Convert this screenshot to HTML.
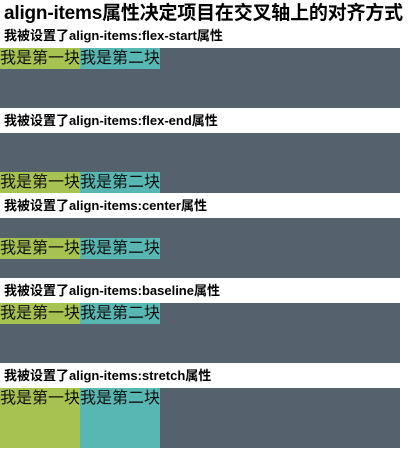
<!DOCTYPE html>
<html><head><meta charset="utf-8"><style>
body{margin:0;width:413px;height:449px;background:#fff;position:relative;overflow:hidden;font-family:"Liberation Sans","Noto Sans CJK SC",sans-serif;}
h1{position:absolute;left:4px;top:0;margin:0;font-size:19px;letter-spacing:-0.2px;line-height:28px;font-weight:bold;color:#000;white-space:nowrap;}
.l{position:absolute;left:4px;margin:0;font-size:13px;line-height:18px;font-weight:bold;white-space:nowrap;}
.c{position:absolute;left:0;width:400px;height:60px;background:#55616c;display:flex;}
.c div{width:80px;height:21px;font-size:16px;line-height:21px;color:#111;white-space:nowrap;overflow:hidden;}
.a{background:#a6c352}.b{background:#59b7b3}
</style></head><body>
<h1>align-items属性决定项目在交叉轴上的对齐方式</h1>
<p class="l" style="top:27px">我被设置了align-items:flex-start属性</p>
<div class="c" style="top:48px;align-items:flex-start"><div class="a">我是第一块</div><div class="b">我是第二块</div></div>
<p class="l" style="top:112px">我被设置了align-items:flex-end属性</p>
<div class="c" style="top:133px;align-items:flex-end"><div class="a">我是第一块</div><div class="b">我是第二块</div></div>
<p class="l" style="top:197px">我被设置了align-items:center属性</p>
<div class="c" style="top:218px;align-items:center"><div class="a">我是第一块</div><div class="b">我是第二块</div></div>
<p class="l" style="top:282px">我被设置了align-items:baseline属性</p>
<div class="c" style="top:303px;align-items:flex-start"><div class="a">我是第一块</div><div class="b">我是第二块</div></div>
<p class="l" style="top:367px">我被设置了align-items:stretch属性</p>
<div class="c" style="top:388px;align-items:stretch"><div class="a" style="height:60px">我是第一块</div><div class="b" style="height:60px">我是第二块</div></div>
</body></html>
